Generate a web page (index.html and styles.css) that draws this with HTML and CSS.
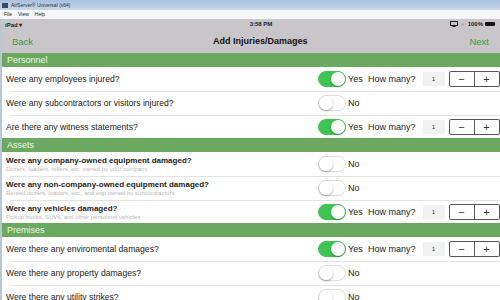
FILE: index.html
```html
<!DOCTYPE html>
<html><head>
<meta charset="utf-8">
<title>AirServer® Universal (x64)</title>
<link rel="stylesheet" href="styles.css">
</head>
<body>
<div class="win">
  <div class="titlebar"><span class="appicon"></span>AirServer® Universal (x64)</div>
  <div class="menubar"><span>File</span><span>View</span><span>Help</span></div>
  <div class="app">
    <div class="status">
      <span class="dev">iPad <span class="caret">&#9662;</span></span>
      <span class="clock">3:58 PM</span>
      <span class="sys">
        <svg width="8" height="6" viewBox="0 0 8 6"><rect x="0.5" y="0.5" width="7" height="4" fill="none" stroke="#222"/><path d="M2 6 L4 3.5 L6 6Z" fill="#222"/></svg>
        <span class="bt">&#8226;</span>
        <span>100%</span>
        <span class="batt"></span>
      </span>
    </div>
    <div class="nav">
      <span class="navbtn">Back</span>
      <span class="navtitle">Add Injuries/Damages</span>
      <span class="navbtn">Next</span>
    </div>

    <div class="section">Personnel</div>
    <div class="row">
      <div class="q">Were any employees injured?</div>
      <div class="ctl"><span class="tog on"></span><span class="lbl">Yes</span><span class="hm">How many?</span><span class="num">1</span><span class="step"><span>&minus;</span><span>+</span></span></div>
    </div>
    <div class="row">
      <div class="q">Were any subcontractors or visitors injured?</div>
      <div class="ctl"><span class="tog"></span><span class="lbl">No</span></div>
    </div>
    <div class="row">
      <div class="q">Are there any witness statements?</div>
      <div class="ctl"><span class="tog on"></span><span class="lbl">Yes</span><span class="hm">How many?</span><span class="num">1</span><span class="step"><span>&minus;</span><span>+</span></span></div>
    </div>

    <div class="section">Assets</div>
    <div class="row">
      <div class="q"><b>Were any company-owned equipment damaged?</b><small>Dozers, loaders, rollers, etc. owned by your company</small></div>
      <div class="ctl"><span class="tog"></span><span class="lbl">No</span></div>
    </div>
    <div class="row">
      <div class="q"><b>Were any non-company-owned equipment damaged?</b><small>Rented dozers, loaders, etc., and eqp owned by subcontractors</small></div>
      <div class="ctl"><span class="tog"></span><span class="lbl">No</span></div>
    </div>
    <div class="row">
      <div class="q"><b>Were any vehicles damaged?</b><small>Pickup trucks, SUVs, and other personnel vehicles</small></div>
      <div class="ctl"><span class="tog on"></span><span class="lbl">Yes</span><span class="hm">How many?</span><span class="num">1</span><span class="step"><span>&minus;</span><span>+</span></span></div>
    </div>

    <div class="section">Premises</div>
    <div class="row">
      <div class="q">Were there any enviromental damages?</div>
      <div class="ctl"><span class="tog on"></span><span class="lbl">Yes</span><span class="hm">How many?</span><span class="num">1</span><span class="step"><span>&minus;</span><span>+</span></span></div>
    </div>
    <div class="row">
      <div class="q">Were there any property damages?</div>
      <div class="ctl"><span class="tog"></span><span class="lbl">No</span></div>
    </div>
    <div class="row">
      <div class="q">Were there any utility strikes?</div>
      <div class="ctl"><span class="tog"></span><span class="lbl">No</span></div>
    </div>
  </div>
</div>
</body>
</html>
```

FILE: styles.css
```css
html, body { margin: 0; padding: 0; }
body {
  width: 500px;
  height: 300px;
  overflow: hidden;
  font-family: "Liberation Sans", Arial, sans-serif;
  color: #1a1a1a;
  background: #fff;
}

.titlebar {
  height: 10px;
  background: linear-gradient(#a9c1dd, #c9d8ea);
  font-size: 5px;
  line-height: 10px;
  color: #333;
  display: flex;
  align-items: center;
  padding-left: 2px;
}
.appicon {
  width: 6px; height: 5px;
  background: #3b4a66;
  margin-right: 3px;
}
.menubar {
  height: 9px;
  background: #f4f6f9;
  font-size: 5px;
  line-height: 9px;
  padding-left: 4px;
  display: flex;
  gap: 6px;
  color: #222;
}

.app { border-left: 2px solid #b9c6d4; }

.status {
  height: 10px;
  background: #c9c6c9;
  display: flex;
  align-items: center;
  justify-content: space-between;
  padding: 0 5px 0 3px;
  font-size: 6px;
  font-weight: bold;
  color: #222;
  position: relative;
}
.caret { font-size: 6px; }
.clock {
  position: absolute;
  left: 20px; right: 0;
  text-align: center;
}
.sys { display: flex; align-items: center; gap: 2px; }
.bt { color: #888; font-size: 6px; margin: 0 2px; }
.batt {
  width: 10px; height: 4px;
  background: #111;
  border-radius: 1px;
}

.nav {
  height: 24px;
  background: #c9c6c9;
  display: flex;
  align-items: center;
  justify-content: space-between;
  padding: 0 11px 0 10px;
}
.navbtn { color: #2f9e52; font-size: 9.5px; }
.navtitle { font-weight: bold; font-size: 9px; color: #111; margin-left: 18px; }

.section {
  height: 14px;
  background: #6aa95f;
  color: #eef7ea;
  font-size: 9px;
  line-height: 15px;
  padding-left: 5px;
}

.row {
  height: 23px;
  display: flex;
  align-items: center;
  justify-content: space-between;
  padding-left: 4px;
  position: relative;
}
.row + .row::before {
  content: "";
  position: absolute;
  top: 0; left: 8px; right: 0;
  border-top: 1px solid #e2e2e2;
}
.row + .row { height: 23px; margin-top: 1px; }

.q { font-size: 8.6px; display: flex; flex-direction: column; }
.q b { font-weight: bold; font-size: 8px; color: #222; }
.q small { font-size: 6px; color: #b8b8b8; margin-top: 1px; }

.ctl {
  width: 182px;
  display: flex;
  align-items: center;
  font-size: 9px;
}
.tog {
  width: 26px; height: 14px;
  border-radius: 8px;
  background: #fff;
  border: 1px solid #dcdcdc;
  position: relative;
  box-sizing: content-box;
}
.tog::after {
  content: "";
  position: absolute;
  top: 0; left: 0;
  width: 14px; height: 14px;
  border-radius: 50%;
  background: #fff;
  box-shadow: 0 1px 2px rgba(0,0,0,0.35);
}
.tog.on { background: #3fc454; border-color: #3fc454; }
.tog.on::after { left: 12px; }
.lbl { margin-left: 2px; width: 18px; }
.hm { margin-left: 2px; }
.num {
  width: 22px; height: 14px;
  background: #f1f1f1;
  margin-left: 7px;
  font-size: 5.5px;
  display: flex;
  align-items: center;
  justify-content: center;
}
.step {
  margin-left: 4px;
  width: 49px; height: 14px;
  border: 1px solid #555;
  border-radius: 2px;
  display: flex;
}
.step span {
  flex: 1;
  display: flex;
  align-items: center;
  justify-content: center;
  font-size: 11px;
  color: #333;
}
.step span + span { border-left: 1px solid #555; }
```
